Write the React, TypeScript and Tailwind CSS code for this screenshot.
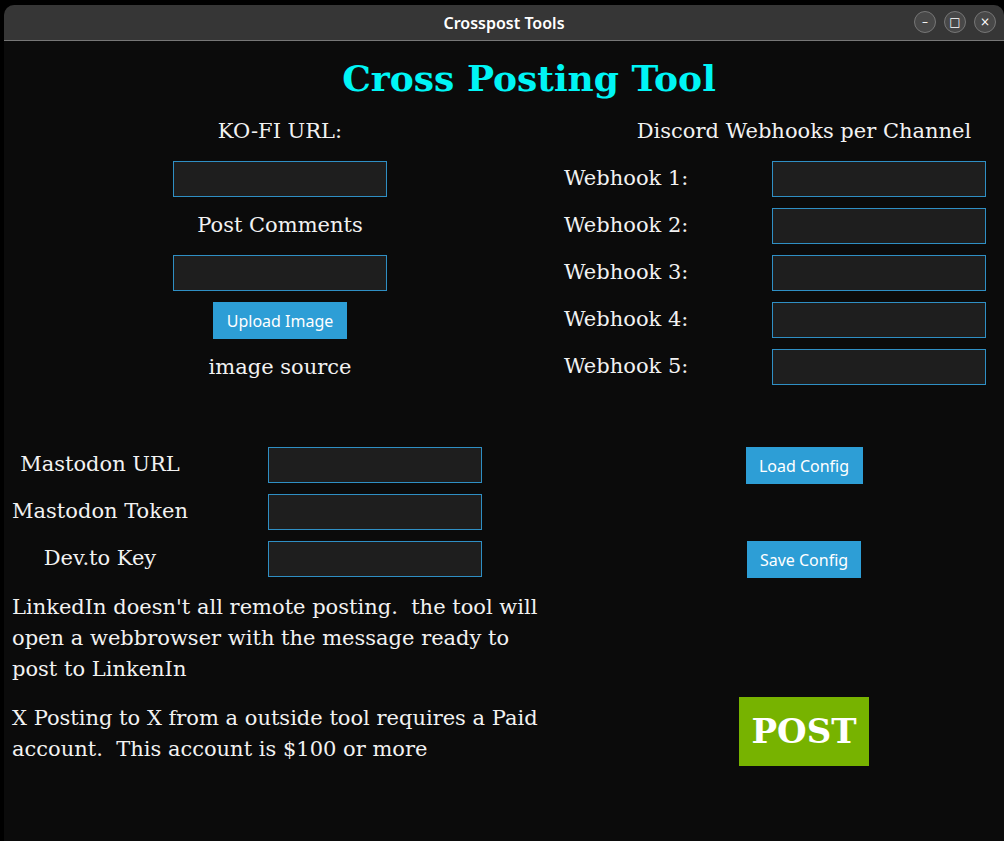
export default function App() {
  const serif = { fontFamily: '"DejaVu Serif", "Liberation Serif", serif' };
  const inp = "h-[36px] w-[214px] bg-[#1e1e1e] border border-[#2f8fc4]";
  const lbl = "h-[36px] flex items-center text-[21px] text-[#f2f2f2]";
  return (
    <div className="w-[1004px] h-[841px] bg-black pl-[4px] pt-[5px] overflow-hidden" style={serif}>
      <div className="h-[836px] w-[1000px] bg-[#0b0b0b] rounded-t-[10px] overflow-hidden flex flex-col">
        <div className="h-[36px] bg-[#363636] border-b border-[#777] flex items-center justify-center relative shrink-0">
          <span className="text-white text-[16px] font-semibold" style={{ fontFamily: '"Noto Sans", sans-serif' }}>Crosspost Tools</span>
          <div className="absolute right-[8px] top-[6px] flex gap-[8px]">
            {["–", "□", "×"].map((c, i) => (
              <div key={i} className="w-[22px] h-[22px] rounded-full bg-[#484848] border border-[#777] flex items-center justify-center text-white text-[12px] leading-none">{c}</div>
            ))}
          </div>
        </div>
        <div className="h-[73px] flex items-center justify-center pl-[50px] shrink-0">
          <span className="text-[#00f5f5] text-[36px] font-bold">Cross Posting Tool</span>
        </div>
        <div className="flex">
          <div className="w-[552px] flex flex-col items-center gap-[11px]">
            <div className={lbl}>KO-FI URL:</div>
            <div className={inp} />
            <div className={lbl}>Post Comments</div>
            <div className={inp} />
            <div className="h-[37px] w-[134px] bg-[#2d9ed6] text-white text-[16px] flex items-center justify-center" style={{ fontFamily: '"Noto Sans", sans-serif' }}>Upload Image</div>
            <div className={lbl}>image source</div>
          </div>
          <div className="flex-1 flex flex-col gap-[11px] pl-[8px]">
            <div className={lbl + " justify-center pl-[40px]"}>Discord Webhooks per Channel</div>
            {[1, 2, 3, 4, 5].map((n) => (
              <div key={n} className="flex items-center">
                <div className={lbl + " w-[208px]"}>Webhook {n}:</div>
                <div className={inp} />
              </div>
            ))}
          </div>
        </div>
        <div className="flex mt-[61px]">
          <div className="w-[552px] flex flex-col">
            <div className="flex flex-col gap-[11px]">
              {["Mastodon URL", "Mastodon Token", "Dev.to Key"].map((t) => (
                <div key={t} className="flex items-center">
                  <div className={lbl + " w-[192px] justify-center"}>{t}</div>
                  <div className={inp + " ml-[72px]"} />
                </div>
              ))}
            </div>
            <div className="pl-[8px] pr-[4px] mt-[15px] text-[21px] leading-[31px] text-[#f2f2f2]">
              LinkedIn doesn't all remote posting.&nbsp; the tool will open a webbrowser with the message ready to post to LinkenIn
            </div>
            <div className="pl-[8px] pr-[4px] mt-[18px] text-[21px] leading-[31px] text-[#f2f2f2]">
              X Posting to X from a outside tool requires a Paid account.&nbsp; This account is $100 or more
            </div>
          </div>
          <div className="flex-1 flex flex-col items-center pl-[48px]">
            <div className="h-[37px] w-[117px] bg-[#2d9ed6] text-white text-[16px] flex items-center justify-center" style={{ fontFamily: '"Noto Sans", sans-serif' }}>Load Config</div>
            <div className="h-[57px]" />
            <div className="h-[37px] w-[114px] bg-[#2d9ed6] text-white text-[16px] flex items-center justify-center" style={{ fontFamily: '"Noto Sans", sans-serif' }}>Save Config</div>
            <div className="h-[119px]" />
            <div className="h-[69px] w-[130px] bg-[#77b300] text-white text-[34px] font-bold flex items-center justify-center">POST</div>
          </div>
        </div>
      </div>
    </div>
  );
}
